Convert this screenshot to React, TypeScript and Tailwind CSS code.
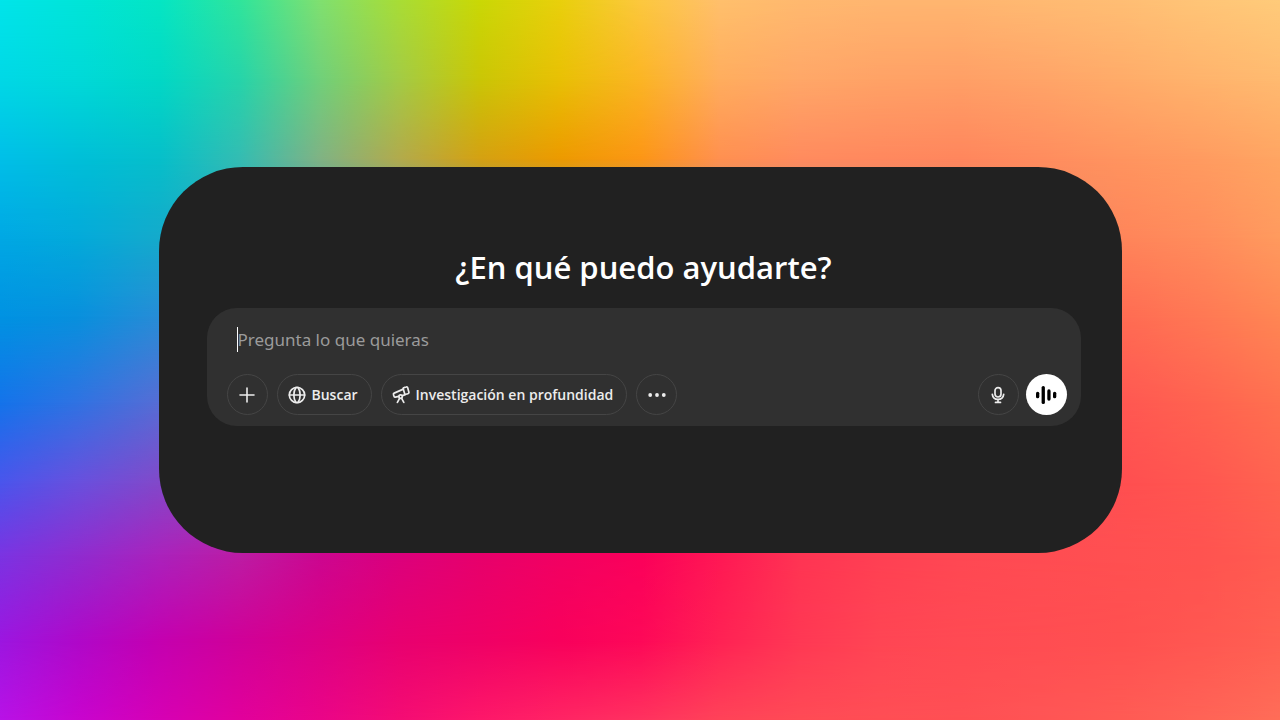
import type { ReactNode } from 'react'

// Each band is one row of the colour mesh, faded in over the row above it
const MESH_BANDS = [
  'bg-[linear-gradient(to_right,#00e5ea,#00e5d8,#05e6c4,#30e59c,#80e070,#a9dd35,#cad806,#e9d00c,#fcc83e,#ffc06c,#ffb96f,#ffb670,#ffb670,#ffba72,#ffbe74,#ffc577,#ffcb7a)]',
  'bg-[linear-gradient(to_right,#00d8e6,#00d9d8,#02d8c6,#26d4aa,#70d07a,#a3cb45,#cac606,#e8c005,#fbb524,#ffad5e,#ffa768,#ffa266,#ff9f66,#ffa468,#ffab69,#ffb36c,#ffba70)] [mask-image:linear-gradient(to_bottom,transparent_0%,black_11%)]',
  'bg-[linear-gradient(to_right,#00bfe8,#00bfd8,#06bfca,#34bcb2,#80b284,#b2aa4c,#d4a112,#ec9a00,#fc9615,#ff9050,#ff8b5e,#ff885e,#ff865d,#ff8c5e,#ff945f,#ff9b60,#ffa562)] [mask-image:linear-gradient(to_bottom,transparent_11%,black_22%)]',
  'bg-[linear-gradient(to_right,#00a8e4_0%,#03aada_6%,#16aaca_13%,#ff855a_88%,#ff8d5c_94%,#ff9a5e_100%)] [mask-image:linear-gradient(to_bottom,transparent_22%,black_33%)]',
  'bg-[linear-gradient(to_right,#0092e2_0%,#0890dd_6%,#2a8cd6_13%,#ff6c53_88%,#ff7854_94%,#ff8654_100%)] [mask-image:linear-gradient(to_bottom,transparent_33%,black_44%)]',
  'bg-[linear-gradient(to_right,#1473ea_0%,#3072e2_6%,#5a6cd4_13%,#ff5852_88%,#ff6350_94%,#ff7050_100%)] [mask-image:linear-gradient(to_bottom,transparent_44%,black_56%)]',
  'bg-[linear-gradient(to_right,#4a55ec_0%,#6850de_6%,#8448c8_13%,#ff4f50_88%,#ff5750_94%,#ff6350_100%)] [mask-image:linear-gradient(to_bottom,transparent_56%,black_67%)]',
  'bg-[linear-gradient(to_right,#7a34e2,#902ccf,#aa22bc,#bc1ca4,#cc0690,#dc007c,#e7006c,#f20062,#fb005b,#ff1854,#ff3453,#ff4053,#ff4853,#ff4c52,#ff5051,#ff5350,#ff5c50)] [mask-image:linear-gradient(to_bottom,transparent_67%,black_77%)]',
  'bg-[linear-gradient(to_right,#9c16e0,#b008c8,#c400b0,#d00098,#dc0084,#e80070,#ef0066,#f8005c,#fd0858,#ff2254,#ff3854,#ff4554,#ff4a53,#ff4d52,#ff5050,#ff5751,#ff6052)] [mask-image:linear-gradient(to_bottom,transparent_77%,black_89%)]',
  'bg-[linear-gradient(to_right,#b812e6,#c804ce,#d600b4,#e1009c,#ea0488,#f40c74,#fd176a,#ff2464,#ff325f,#ff4359,#ff4b56,#ff4e55,#ff5054,#ff5555,#ff5b55,#ff6357,#ff6d58)] [mask-image:linear-gradient(to_bottom,transparent_89%,black_100%)]',
]

const iconProps = {
  viewBox: '0 0 20 20',
  fill: 'none',
  stroke: 'currentColor',
  strokeLinecap: 'round',
  strokeLinejoin: 'round',
  'aria-hidden': true,
} as const

function PlusIcon() {
  return (
    <svg {...iconProps} strokeWidth="1.6" className="size-5">
      <path d="M10 3v14M3 10h14" />
    </svg>
  )
}

function GlobeIcon() {
  return (
    <svg {...iconProps} strokeWidth="1.7" className="size-5">
      <circle cx="10" cy="10" r="7.7" />
      <path d="M9 2.400C6.100 6.500 6.100 13.500 9 17.600M11 2.400C13.900 6.500 13.900 13.500 11 17.600M2.400 10h15.200" />
    </svg>
  )
}

function TelescopeIcon() {
  return (
    <svg {...iconProps} strokeWidth="1.7" className="size-5">
      <path d="M13 2.600L15.200 2a1.200 1.200 0 0 1 1.500.8l1.200 4.400a1.200 1.200 0 0 1-.9 1.500l-2.200.6a1 1 0 0 1-1.200-.7L12.200 3.800a1 1 0 0 1 .8-1.200Z" />
      <path d="M12.300 4.100L3.200 8.100a1.300 1.300 0 0 0-.7 1.600l.5 1.500a1.300 1.300 0 0 0 1.400.9l3.400-.7M11.200 10.600l2.500-.7" />
      <circle cx="9.600" cy="11.600" r="1.700" />
      <path d="M8.700 13.200L6.400 17.400M10.500 13.200l2.300 4.200" />
    </svg>
  )
}

function DotsIcon() {
  return (
    <svg viewBox="0 0 20 20" fill="currentColor" aria-hidden="true" className="size-5">
      <circle cx="3.200" cy="10" r="1.900" />
      <circle cx="10" cy="10" r="1.900" />
      <circle cx="16.800" cy="10" r="1.900" />
    </svg>
  )
}

function MicIcon() {
  return (
    <svg {...iconProps} strokeWidth="1.7" className="size-5">
      <rect x="7" y="2.600" width="6" height="9.400" rx="3" />
      <path d="M4.300 9.300C4.700 12.400 7 14.300 10 14.300s5.300-1.900 5.700-5M10 14.300v3M7.500 17.400h5" />
    </svg>
  )
}

function VoiceIcon() {
  return (
    <svg viewBox="0 0 24 24" fill="currentColor" aria-hidden="true" className="size-6">
      <rect x="2" y="8.700" width="3.300" height="6.600" rx="1.600" />
      <rect x="7.600" y="3" width="3.300" height="18" rx="1.600" />
      <rect x="13.300" y="6.300" width="3.300" height="11.400" rx="1.600" />
      <rect x="19" y="8.700" width="3.300" height="6.600" rx="1.600" />
    </svg>
  )
}

function RoundButton({ label, children }: { label: string; children: ReactNode }) {
  return (
    <button
      type="button"
      aria-label={label}
      className="flex size-[41px] shrink-0 items-center justify-center rounded-full border border-[#454545] hover:bg-[#3a3a3a]"
    >
      {children}
    </button>
  )
}

function PillButton({ icon, children }: { icon: ReactNode; children: ReactNode }) {
  return (
    <button
      type="button"
      className="flex h-[41px] items-center gap-[5px] rounded-full border border-[#454545] pr-[13px] pl-[9px] text-[14px] font-semibold whitespace-nowrap hover:bg-[#3a3a3a]"
    >
      {icon}
      {children}
    </button>
  )
}

export default function App() {
  return (
    <div className="grid min-h-screen font-['Open_Sans','Noto_Sans',sans-serif]">
      {MESH_BANDS.map((band) => (
        <div key={band} className={`[grid-area:1/1] ${band}`} />
      ))}

      <main className="z-10 w-full max-w-[963px] place-self-center rounded-[84px] bg-[#212121] pt-[78px] pr-[41px] pb-[127px] pl-12 [grid-area:1/1]">
        <h1 className="text-center text-[31px] leading-[44px] font-semibold text-white">¿En qué puedo ayudarte?</h1>

        <form
          onSubmit={(e) => e.preventDefault()}
          className="mt-[19px] rounded-[30px] bg-[#303030] pt-[19px] pr-[14px] pb-[11px] pl-5 text-[#ececec]"
        >
          <div className="px-[10px]">
            <input
              type="text"
              aria-label="Pregunta lo que quieras"
              placeholder="Pregunta lo que quieras"
              className="block h-[25px] w-full border-l border-white bg-transparent font-['Noto_Sans','Open_Sans',sans-serif] text-[17px] leading-[25px] outline-none placeholder:text-[#9b9b9b]"
            />
          </div>

          <div className="mt-[22px] flex items-center justify-between">
            <div className="flex items-center gap-[9px]">
              <RoundButton label="Añadir">
                <PlusIcon />
              </RoundButton>
              <PillButton icon={<GlobeIcon />}>Buscar</PillButton>
              <PillButton icon={<TelescopeIcon />}>Investigación en profundidad</PillButton>
              <RoundButton label="Más">
                <DotsIcon />
              </RoundButton>
            </div>

            <div className="flex items-center gap-[7px]">
              <RoundButton label="Dictar">
                <MicIcon />
              </RoundButton>
              <button
                type="button"
                aria-label="Modo de voz"
                className="flex size-[41px] shrink-0 items-center justify-center rounded-full bg-white text-black"
              >
                <VoiceIcon />
              </button>
            </div>
          </div>
        </form>
      </main>
    </div>
  )
}
